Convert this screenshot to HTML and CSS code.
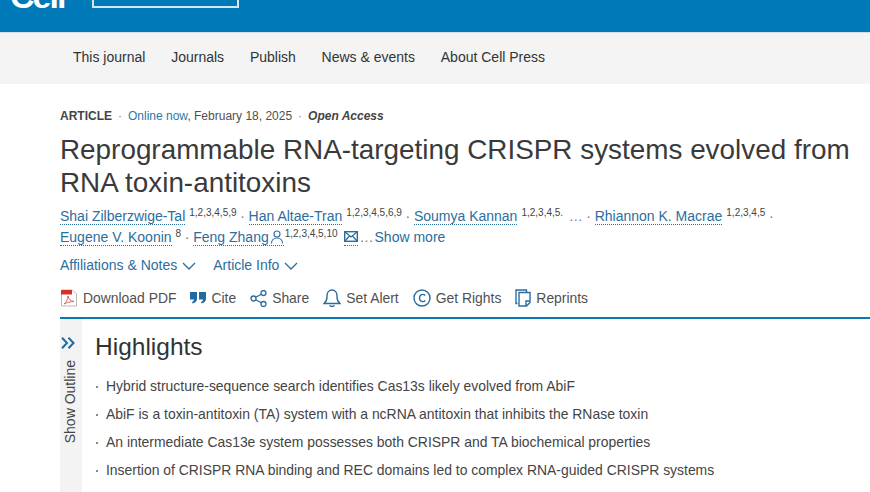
FILE: index.html
```html
<!DOCTYPE html>
<html lang="en">
<head>
<meta charset="utf-8">
<title>Reprogrammable RNA-targeting CRISPR systems</title>
<link rel="stylesheet" href="styles.css">
</head>
<body>
<header class="topbar">
  <span class="logo">Cell</span>
  <span class="logo-box"></span>
</header>
<nav class="mainnav">
  <a>This journal</a><a>Journals</a><a>Publish</a><a>News &amp; events</a><a>About Cell Press</a>
</nav>
<main class="article">
  <div class="meta"><b>ARTICLE</b><i class="dot">·</i><span class="link">Online now</span>, February 18, 2025<i class="dot">·</i><em>Open Access</em></div>
  <h1 class="title">Reprogrammable RNA-targeting CRISPR systems evolved from RNA toxin-antitoxins</h1>
  <div class="authors">
    <div class="aline"><a class="au">Shai Zilberzwige-Tal</a><sup>1,2,3,4,5,9</sup><i class="sep">·</i><a class="au">Han Altae-Tran</a><sup>1,2,3,4,5,6,9</sup><i class="sep">·</i><a class="au">Soumya Kannan</a><sup>1,2,3,4,5.</sup><i class="sep wide">…</i><i class="sep">·</i><a class="au">Rhiannon K. Macrae</a><sup>1,2,3,4,5</sup><i class="sep">·</i></div>
    <div class="aline"><a class="au">Eugene V. Koonin</a><sup>8</sup><i class="sep">·</i><a class="au">Feng Zhang<svg class="person" viewBox="0 0 14 14" width="14" height="14"><circle cx="7" cy="4" r="3" fill="none" stroke="#2b6e9e" stroke-width="1.1"/><path d="M1.5 13.5c0-3.500 2.500-5.500 5.500-5.500s5.500 2 5.500 5.500" fill="none" stroke="#2b6e9e" stroke-width="1.1"/></svg></a><sup class="tight">1,2,3,4,5,10</sup><a class="au mail"><svg viewBox="0 0 14 11" width="14" height="11"><rect x=".7" y=".7" width="12.600" height="9.600" fill="none" stroke="#2b6e9e" stroke-width="1.400"/><path d="M1 1l6 5 6-5M1 10l4.500-5M13 10L8.500 5" fill="none" stroke="#2b6e9e" stroke-width="1.200"/></svg></a><span class="dots">…</span><a class="more">Show more</a></div>
  </div>
  <div class="toggles">
    <a>Affiliations &amp; Notes<svg viewBox="0 0 14 8" width="14" height="8"><path d="M1 1l6 6 6-6" fill="none" stroke="#2b6e9e" stroke-width="1.300"/></svg></a>
    <a>Article Info<svg viewBox="0 0 14 8" width="14" height="8"><path d="M1 1l6 6 6-6" fill="none" stroke="#2b6e9e" stroke-width="1.300"/></svg></a>
  </div>
  <div class="tools">
    <a><svg viewBox="0 0 18 18" width="18" height="18"><path d="M1.500 1h11l4 4v12h-15z" fill="#fff" stroke="#b9b9b9"/><rect x="1" y="1" width="11" height="4.500" fill="#d8312a"/><path d="M4 15c2-1.500 3.500-4 4-8 .5 3 2.500 5 6 5.500-3.500 0-7 1-10 2.500z" fill="none" stroke="#e0655f" stroke-width="1"/></svg>Download PDF</a>
    <a><svg viewBox="0 0 16 12" width="16" height="12"><path d="M0 0h7v6.500c0 2.500-1.500 4.500-4.500 5l-.5-1.500c1.300-.4 2-1.200 2-2.500H0zM9 0h7v6.500c0 2.500-1.500 4.500-4.500 5l-.5-1.500c1.300-.4 2-1.200 2-2.500H9z" fill="#1f6aa0"/></svg>Cite</a>
    <a><svg viewBox="0 0 17 17" width="17" height="17" fill="none" stroke="#2b6e9e" stroke-width="1.300"><circle cx="3.500" cy="8.500" r="2.500"/><circle cx="13.500" cy="3" r="2.500"/><circle cx="13.500" cy="14" r="2.500"/><path d="M5.700 7.300l5.600-3.100M5.700 9.700l5.600 3.100"/></svg>Share</a>
    <a><svg viewBox="0 0 18 18" width="18" height="18" fill="none" stroke="#2b6e9e" stroke-width="1.400"><path d="M1 14.500h16c-2-1.500-3-3-3-6.500V6.500C14 3.500 12 1 9 1S4 3.500 4 6.500V8c0 3.500-1 5-3 6.500z"/><path d="M6.500 16.500c1.500 1.200 3.500 1.200 5 0"/></svg>Set Alert</a>
    <a><svg viewBox="0 0 18 18" width="18" height="18" fill="none" stroke="#2b6e9e" stroke-width="1.400"><circle cx="9" cy="9" r="8"/><path d="M12.200 6.500c-1.700-2-5.700-1.300-5.700 2.500s4 4.500 5.700 2.500"/></svg>Get Rights</a>
    <a><svg viewBox="0 0 16 18" width="16" height="18" fill="none" stroke="#2b6e9e" stroke-width="1.400"><path d="M2.500 14.500H1V1h10.500v2"/><path d="M4 3.500h11v10l-3.500 3.500H4zM15 12h-4v5"/></svg>Reprints</a>
  </div>
  <div class="body">
    <aside class="outline">
      <svg class="outline-icon" viewBox="0 0 14 12" width="14" height="12" fill="none" stroke="#1f6aa0" stroke-width="2"><path d="M1 .8l5 5.200-5 5.200M7.500.8l5 5.200-5 5.200"/></svg>
      <span class="outline-label">Show Outline</span>
    </aside>
    <section class="content">
      <h2 class="heading">Highlights</h2>
      <ul class="highlights">
        <li>Hybrid structure-sequence search identifies Cas13s likely evolved from AbiF</li>
        <li>AbiF is a toxin-antitoxin (TA) system with a ncRNA antitoxin that inhibits the RNase toxin</li>
        <li>An intermediate Cas13e system possesses both CRISPR and TA biochemical properties</li>
        <li>Insertion of CRISPR RNA binding and REC domains led to complex RNA-guided CRISPR systems</li>
      </ul>
    </section>
  </div>
</main>
</body>
</html>
```
FILE: styles.css
```css
html, body { margin: 0; padding: 0; height: 492px; overflow: hidden; background: #fff; }
body { font-family: "Liberation Sans", Arial, sans-serif; color: #333; }
a { color: inherit; text-decoration: none; }

.topbar { height: 33px; background: #0079b8; box-sizing: border-box; overflow: hidden; display: flex; align-items: flex-end; padding: 0 0 24px 10px; border-bottom: 1px solid #d6dde3; }
.logo { font-size: 34px; font-weight: 700; line-height: 24px; color: #fff; letter-spacing: -2px; width: 82px; flex: none; }
.logo-box { width: 147px; height: 30px; border: 1px solid #d3e6f2; box-sizing: border-box; border-width: 0 2px 2px 2px; flex: none; }

.mainnav { height: 51px; box-sizing: border-box; padding-bottom: 3px; background: #f4f4f4; display: flex; align-items: center; gap: 25.800px; padding-left: 73px; font-size: 14px; color: #333; }

.article { padding-left: 60px; }
.meta { font-size: 12px; line-height: 14px; padding-top: 25px; color: #505050; white-space: nowrap; }
.meta b { color: #444; }
.meta em { font-weight: 700; color: #444; }
.meta .dot { font-style: normal; margin: 0 6px; color: #888; }
.link { color: #2b7aa8; }

.title { font-size: 27.860px; font-weight: 400; line-height: 33px; margin: 10px 0 0; color: #3a3a3a; }

.authors { margin-top: 7px; font-size: 14px; color: #2b6e9e; }
.aline { height: 21px; line-height: 21px; display: flex; align-items: baseline; white-space: nowrap; }
.au { border-bottom: 1px dotted #2b6e9e; line-height: 15px; }
.person { margin-left: 1px; vertical-align: -2px; }
.mail { margin-left: 6px; }
.aline sup { font-size: 10px; color: #444; margin-left: 4px; line-height: 0; position: relative; top: -5px; }
.aline sup.tight { margin-left: 1px; }
.sep { font-style: normal; color: #777; margin: 0 3.700px; }
.sep.wide { margin: 0 0 0 5.500px; }
.dots { color: #777; margin-left: 2px; }
.more { margin-left: 1px; color: #2b6e9e; }

.toggles { display: flex; gap: 17px; margin-top: 7px; font-size: 14px; line-height: 20px; color: #2b6e9e; }
.toggles svg { margin-left: 5px; }

.tools { display: flex; align-items: center; gap: 14px; margin-top: 10px; height: 26px; padding-bottom: 6px; font-size: 13.900px; color: #505050; border-bottom: 2px solid #0a78b5; }
.tools a { display: flex; align-items: center; gap: 5px; }

.body { display: flex; height: 174px; }
.outline { width: 22px; background: #f3f3f3; display: flex; flex-direction: column; align-items: center; padding-top: 18px; box-sizing: border-box; flex: none; gap: 11px; }
.outline-icon { align-self: flex-start; margin-left: 1px; }
.outline-label { writing-mode: vertical-rl; transform: rotate(180deg); font-size: 14px; line-height: 16px; color: #444; margin-right: 2px; }

.content { padding-left: 13px; }
.heading { font-size: 24.500px; font-weight: 400; line-height: 28px; margin: 14px 0 0; color: #333; }
.highlights { list-style: none; margin: 11px 0 0; padding: 0; font-size: 13.930px; line-height: 28px; color: #444; }
.highlights li { padding-left: 11px; position: relative; white-space: nowrap; }
.highlights li::before { content: ""; position: absolute; left: 1px; top: 14px; width: 2px; height: 2px; background: #888; }
```
